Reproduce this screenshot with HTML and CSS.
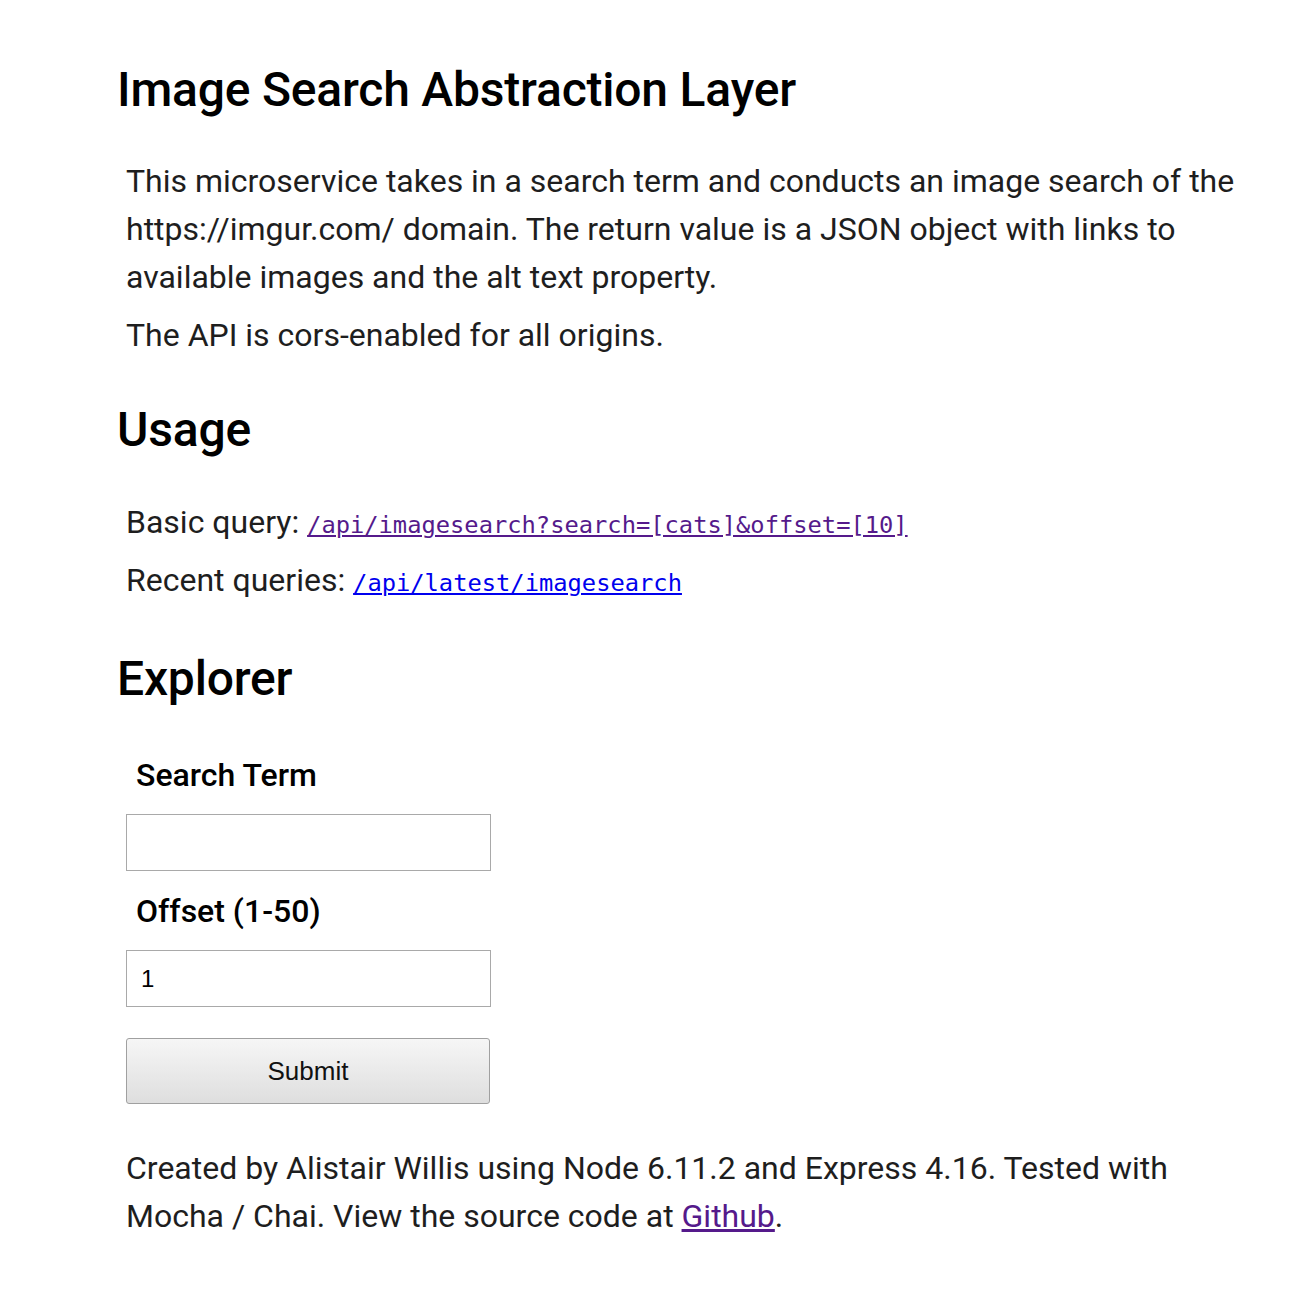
FILE: index.html
```html
<!DOCTYPE html>
<html>
<head>
<meta charset="utf-8">
<title>Image Search Abstraction Layer</title>
<link rel="stylesheet" href="styles.css">
</head>
<body>
<main class="page">
  <h1 class="title">Image Search Abstraction Layer</h1>
  <section class="block">
    <p class="text">This microservice takes in a search term and conducts an image search of the https://imgur.com/ domain. The return value is a JSON object with links to available images and the alt text property.</p>
    <p class="text">The API is cors-enabled for all origins.</p>
  </section>
  <h2 class="title">Usage</h2>
  <section class="block usage-block">
    <p class="text usage">Basic query: <a class="code visited" href="#">/api/imagesearch?search=[cats]&amp;offset=[10]</a></p>
    <p class="text usage">Recent queries: <a class="code" href="#">/api/latest/imagesearch</a></p>
  </section>
  <h2 class="title">Explorer</h2>
  <form class="form">
    <label class="label" for="term">Search Term</label>
    <input class="field" id="term" type="text">
    <label class="label" for="offset">Offset (1-50)</label>
    <input class="field" id="offset" type="text" value="1">
    <button class="submit" type="button">Submit</button>
  </form>
  <p class="text footer">Created by Alistair Willis using Node 6.11.2 and Express 4.16. Tested with Mocha / Chai. View the source code at <a class="visited plain" href="#">Github</a>.</p>
</main>
</body>
</html>
```
FILE: styles.css
```css
html, body {
  margin: 0;
  padding: 0;
  background: #fff;
}
body {
  font-family: Roboto, "Noto Sans", sans-serif;
  color: #1e1e1e;
}
.page {
  padding: 40px 40px 40px 117px;
}
.title {
  font-weight: 500;
  color: #000;
  font-size: 48px;
  line-height: 56px;
  margin: 43px 0 40px 0;
  letter-spacing: -0.2px;
}
h1.title {
  margin-top: 22px;
  margin-bottom: 39px;
}
.block {
  margin-left: 9px;
}
.usage-block {
  margin-bottom: 47px;
}
.text {
  font-size: 32px;
  line-height: 48px;
  margin: 0 0 10px 0;
}
.usage {
  margin-bottom: 10px;
}
.code {
  font-family: "DejaVu Sans Mono", monospace;
  font-size: 23.75px;
  line-height: 1;
  color: #0000ee;
}
.visited {
  color: #551a8b;
}
.form {
  display: flex;
  flex-direction: column;
  align-items: flex-start;
  margin-left: 9px;
}
.label {
  font-size: 32px;
  font-weight: 500;
  color: #000;
  margin: 9px 0 20px 10px;
}
.field {
  width: 365px;
  height: 57px;
  box-sizing: border-box;
  border: 1px solid #a9a9a9;
  padding: 0 14px;
  font-family: "Liberation Sans", Arial, sans-serif;
  font-size: 24px;
  color: #000;
  margin: 0 0 12px 0;
}
.submit {
  width: 364px;
  height: 66px;
  margin-top: 19px;
  border: 1px solid #a0a0a0;
  border-radius: 3px;
  background: linear-gradient(#f6f6f6, #dedede);
  font-family: "Liberation Sans", Arial, sans-serif;
  font-size: 26px;
  color: #111;
}
.footer {
  margin: 40px 0 0 9px;
}
```
